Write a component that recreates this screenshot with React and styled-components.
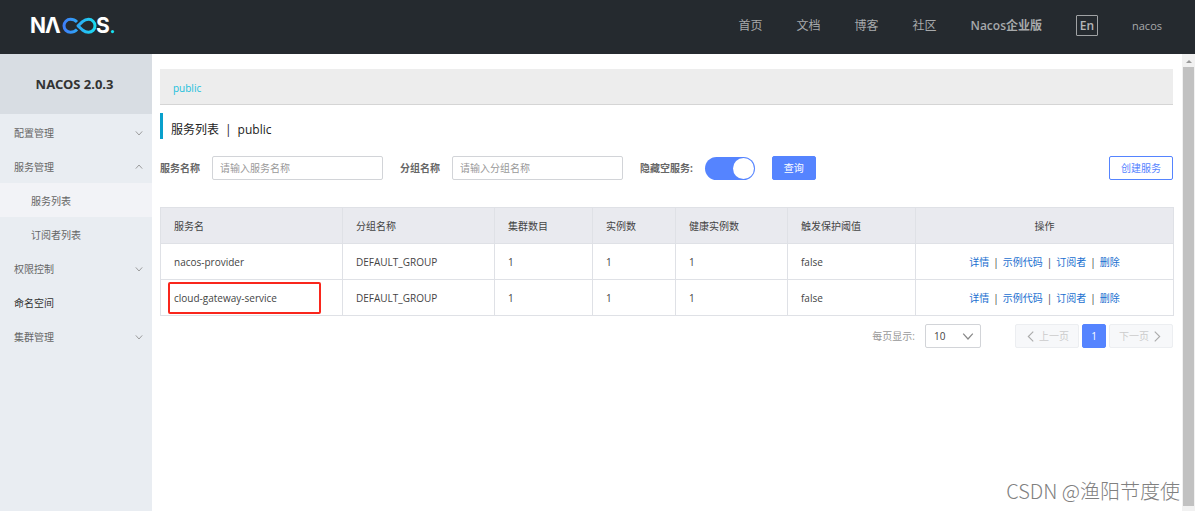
import React from 'react';
import styled, { createGlobalStyle } from 'styled-components';

const GlobalStyle = createGlobalStyle`
  * { box-sizing: border-box; }
  body {
    margin: 0;
    background: #fff;
    color: #444;
    font: 10px/20px "Open Sans", "Noto Sans CJK SC", sans-serif;
  }
  button, input, select { font: inherit; color: inherit; }
  ul { list-style: none; margin: 0; padding: 0; }
  a { text-decoration: none; }
`;

const Page = styled.div`
  display: flex;
  flex-direction: column;
  min-height: 100vh;
`;

const Header = styled.header`
  display: flex;
  align-items: center;
  justify-content: space-between;
  height: 54px;
  padding: 0 33px 3px 30px;
  background: #252a2f;
`;

const LogoLink = styled.a`
  display: flex;
`;

const Nav = styled.nav`
  display: flex;
  align-items: center;
  gap: 34px;
`;

const NavLink = styled.a`
  color: #a7a9ab;
  font-size: 12px;
  font-weight: ${(p) => (p.$strong ? 600 : 400)};
`;

const LangButton = styled.button`
  width: 22px;
  height: 21px;
  padding: 0;
  border: 1px solid #a0a2a4;
  border-radius: 1px;
  background: none;
  color: #b4b6b8;
  font-size: 12px;
  font-weight: 600;
  line-height: 18px;
`;

const UserLink = styled.a`
  color: #a7a9ab;
  font-size: 11px;
`;

const Body = styled.div`
  display: flex;
  flex: 1;
`;

const Sidebar = styled.aside`
  flex: none;
  width: 152px;
  background: #e9edf2;
`;

const Version = styled.h1`
  margin: 0;
  height: 60px;
  background: #d8dde3;
  color: #333;
  font: bold 13px/60px "Noto Sans", sans-serif;
  text-align: center;
  padding-right: 3px;
`;

const Menu = styled.ul`
  padding-top: 1px;
`;

const MenuLink = styled.a`
  display: flex;
  align-items: center;
  justify-content: space-between;
  height: 34px;
  padding: 1px 9px 0 ${(p) => (p.$sub ? 31 : 14)}px;
  background: ${(p) => (p.$active ? '#f2f3f7' : 'transparent')};
  color: ${(p) => (p.$dark ? '#333' : '#666')};
`;

const Main = styled.main`
  position: relative;
  flex: 1;
  min-width: 0;
  padding: 15px 9px 0 8px;
`;

const NamespaceBar = styled.div`
  height: 36px;
  padding: 9px 13px 0;
  border-bottom: 1px solid #d5d5d5;
  background: #ededed;
`;

const NamespaceLink = styled.a`
  color: #20c0dc;
`;

const Title = styled.h2`
  margin: 8px 0 0;
  height: 26px;
  padding: 7px 0 0 8px;
  border-left: 3px solid #09a0cc;
  color: #222;
  font-size: 12px;
  font-weight: 400;
  line-height: 20px;
`;

const Divider = styled.span`
  margin: 0 6px;
`;

const Filters = styled.form`
  display: flex;
  align-items: center;
  margin-top: 17px;
`;

const Field = styled.div`
  display: flex;
  align-items: center;
  gap: 12px;
  margin-right: 17px;
`;

const Label = styled.label`
  color: #666;
  font-weight: 700;
`;

const TextInput = styled.input`
  width: 171px;
  height: 24px;
  padding: 0 7px;
  border: 1px solid #d2d4d8;
  border-radius: 2px;
  &::placeholder { color: #999; opacity: 1; }
`;

const Switch = styled.input`
  appearance: none;
  width: 50px;
  height: 23px;
  margin: 0;
  padding: 1px;
  border-radius: 12px;
  background: #5584ff;
  display: flex;
  justify-content: flex-end;
  &::after {
    content: '';
    width: 21px;
    height: 21px;
    border-radius: 50%;
    background: #fff;
  }
`;

const Button = styled.button`
  height: 24px;
  padding: 0 11px;
  border: 1px solid #5584ff;
  border-radius: 2px;
  background: ${(p) => (p.$primary ? '#5584ff' : '#fff')};
  color: ${(p) => (p.$primary ? '#fff' : '#5584ff')};
  margin-left: ${(p) => (p.$end ? 'auto' : 0)};
`;

const Table = styled.table`
  width: 100%;
  margin-top: 27px;
  border-collapse: collapse;
  table-layout: fixed;
`;

const Col = styled.col`
  width: ${(p) => p.$w}px;
`;

const cell = `
  height: 36px;
  padding: 0 13px;
  border: 1px solid #dfe1e6;
`;

const Th = styled.th`
  ${cell}
  background: #e9eaef;
  font-weight: 400;
  text-align: ${(p) => (p.$center ? 'center' : 'left')};
`;

const Td = styled.td`
  ${cell}
  position: relative;
`;

const Highlight = styled.span`
  position: absolute;
  inset: 2px 21px 1px 7px;
  border: 2px solid #f9261c;
  border-radius: 2px;
`;

const Actions = styled.div`
  display: flex;
  justify-content: center;
  gap: 4px;
`;

const ActionLink = styled.a`
  color: #1a6fd0;
`;

const Pager = styled.div`
  display: flex;
  align-items: center;
  justify-content: flex-end;
  margin-top: 8px;
`;

const SizeLabel = styled.label`
  margin-right: 10px;
  color: #999;
`;

const SelectWrap = styled.div`
  position: relative;
  margin-right: 34px;
  svg {
    position: absolute;
    top: 6px;
    right: 7px;
    pointer-events: none;
  }
`;

const Select = styled.select`
  appearance: none;
  display: block;
  width: 56px;
  height: 24px;
  padding: 0 8px;
  border: 1px solid #d2d4d8;
  border-radius: 2px;
  background: #fff;
`;

const PageButton = styled.button`
  display: flex;
  align-items: center;
  justify-content: center;
  gap: 3px;
  width: ${(p) => (p.$current ? 24 : 64)}px;
  height: 24px;
  margin-left: ${(p) => (p.$first ? 0 : 3)}px;
  padding: 0;
  border: 1px solid ${(p) => (p.$current ? '#5584ff' : '#eceef1')};
  border-radius: 2px;
  background: ${(p) => (p.$current ? '#5584ff' : '#f7f8fa')};
  color: ${(p) => (p.$current ? '#fff' : '#ccc')};
`;

const Watermark = styled.div`
  position: absolute;
  right: 2px;
  bottom: 5px;
  color: #808080;
  font: 300 20px/30px "Noto Sans CJK SC", sans-serif;
`;

const ScrollTrack = styled.div`
  display: flex;
  flex-direction: column;
  align-items: center;
  flex: none;
  width: 13px;
  padding: 5px 1px;
  gap: 4px;
  background: #f1f1f1;
`;

const ScrollThumb = styled.div`
  flex: 1;
  width: 100%;
  background: #c1c1c1;
`;

function Chevron({ dir = 'down', size = 8, color = '#888' }) {
  const d = {
    down: 'M1 3 L5 7.5 L9 3',
    up: 'M1 7 L5 2.5 L9 7',
    left: 'M7.5 0.5 L3 5 L7.5 9.5',
    right: 'M2.5 0.5 L7 5 L2.5 9.5',
  }[dir];
  return (
    <svg width={size} height={size} viewBox="0 0 10 10" fill="none" stroke={color} aria-hidden="true">
      <path d={d} />
    </svg>
  );
}

function Logo() {
  return (
    <svg width="90" height="30" viewBox="-1 -6 90 30" overflow="visible" role="img" aria-label="NACOS">
      <defs>
        <linearGradient id="loop" x1="32" y1="0" x2="66" y2="0" gradientUnits="userSpaceOnUse">
          <stop offset="0" stopColor="#3f7dfb" />
          <stop offset="1" stopColor="#18e0f0" />
        </linearGradient>
      </defs>
      <g fill="#fff" fontFamily="Inter, sans-serif" fontSize="21" fontWeight="700">
        <text x="-1" y="16">N</text>
        <text x="14" y="16">Λ</text>
        <text x="65" y="16">S</text>
      </g>
      <g fill="none" stroke="url(#loop)" strokeWidth="3" strokeLinejoin="round">
        <path d="M46 5 C44 3 42 2.300 39.500 2.300 A6.500 6.500 0 0 0 39.500 15.300 C42 15.300 44 14.500 46 12.500" />
        <path d="M47 8.800 L51.500 4.600 C53.500 3 55 2.300 57.500 2.300 A6.500 6.500 0 0 1 57.500 15.300 C55 15.300 53.500 14.600 51.500 13 Z" />
      </g>
      <circle cx="81.500" cy="14.600" r="1.600" fill="#18e0f0" />
    </svg>
  );
}

const navItems = ['首页', '文档', '博客', '社区'];

const menu = [
  { name: '配置管理', arrow: 'down' },
  { name: '服务管理', arrow: 'up', children: ['服务列表', '订阅者列表'] },
  { name: '权限控制', arrow: 'down' },
  { name: '命名空间', dark: true },
  { name: '集群管理', arrow: 'down' },
];

const columns = [
  ['服务名', 182],
  ['分组名称', 152],
  ['集群数目', 98],
  ['实例数', 83],
  ['健康实例数', 112],
  ['触发保护阈值', 128],
  ['操作', 258],
];

const services = [
  { name: 'nacos-provider' },
  { name: 'cloud-gateway-service', marked: true },
];

const actions = ['详情', '示例代码', '订阅者', '删除'];

export default function App() {
  return (
    <Page>
      <GlobalStyle />
      <Header>
        <LogoLink href="#"><Logo /></LogoLink>
        <Nav>
          {navItems.map((n) => <NavLink href="#" key={n}>{n}</NavLink>)}
          <NavLink href="#" $strong>Nacos企业版</NavLink>
          <LangButton type="button">En</LangButton>
          <UserLink href="#">nacos</UserLink>
        </Nav>
      </Header>
      <Body>
        <Sidebar>
          <Version>NACOS 2.0.3</Version>
          <Menu>
            {menu.map((m) => (
              <li key={m.name}>
                <MenuLink href="#" $dark={m.dark}>
                  {m.name}
                  {m.arrow && <Chevron dir={m.arrow} />}
                </MenuLink>
                {m.children && (
                  <ul>
                    {m.children.map((c, i) => (
                      <li key={c}><MenuLink href="#" $sub $active={i === 0}>{c}</MenuLink></li>
                    ))}
                  </ul>
                )}
              </li>
            ))}
          </Menu>
        </Sidebar>
        <Main>
          <NamespaceBar><NamespaceLink href="#">public</NamespaceLink></NamespaceBar>
          <Title>服务列表<Divider>|</Divider>public</Title>
          <Filters>
            <Field>
              <Label htmlFor="service">服务名称</Label>
              <TextInput id="service" placeholder="请输入服务名称" />
            </Field>
            <Field>
              <Label htmlFor="group">分组名称</Label>
              <TextInput id="group" placeholder="请输入分组名称" />
            </Field>
            <Field>
              <Label htmlFor="hide">隐藏空服务:</Label>
              <Switch id="hide" type="checkbox" role="switch" defaultChecked />
            </Field>
            <Button type="button" $primary>查询</Button>
            <Button type="button" $end>创建服务</Button>
          </Filters>
          <Table>
            <colgroup>{columns.map(([n, w]) => <Col key={n} $w={w} />)}</colgroup>
            <thead>
              <tr>{columns.map(([n]) => <Th key={n} $center={n === '操作'}>{n}</Th>)}</tr>
            </thead>
            <tbody>
              {services.map((s) => (
                <tr key={s.name}>
                  <Td>{s.name}{s.marked && <Highlight />}</Td>
                  <Td>DEFAULT_GROUP</Td>
                  <Td>1</Td>
                  <Td>1</Td>
                  <Td>1</Td>
                  <Td>false</Td>
                  <Td>
                    <Actions>
                      {actions.map((a, i) => (
                        <React.Fragment key={a}>
                          {i > 0 && <span>|</span>}
                          <ActionLink href="#">{a}</ActionLink>
                        </React.Fragment>
                      ))}
                    </Actions>
                  </Td>
                </tr>
              ))}
            </tbody>
          </Table>
          <Pager>
            <SizeLabel htmlFor="size">每页显示:</SizeLabel>
            <SelectWrap>
              <Select id="size" defaultValue="10">
                <option>10</option>
                <option>20</option>
              </Select>
              <Chevron size={12} />
            </SelectWrap>
            <PageButton type="button" disabled $first><Chevron dir="left" size={11} color="#aaa" />上一页</PageButton>
            <PageButton type="button" $current>1</PageButton>
            <PageButton type="button" disabled>下一页<Chevron dir="right" size={11} color="#aaa" /></PageButton>
          </Pager>
          <Watermark>CSDN @渔阳节度使</Watermark>
        </Main>
        <ScrollTrack aria-hidden="true">
          <svg width="6" height="4" viewBox="0 0 6 4"><path d="M0 4 L3 1 L6 4 Z" fill="#999" /></svg>
          <ScrollThumb />
        </ScrollTrack>
      </Body>
    </Page>
  );
}
